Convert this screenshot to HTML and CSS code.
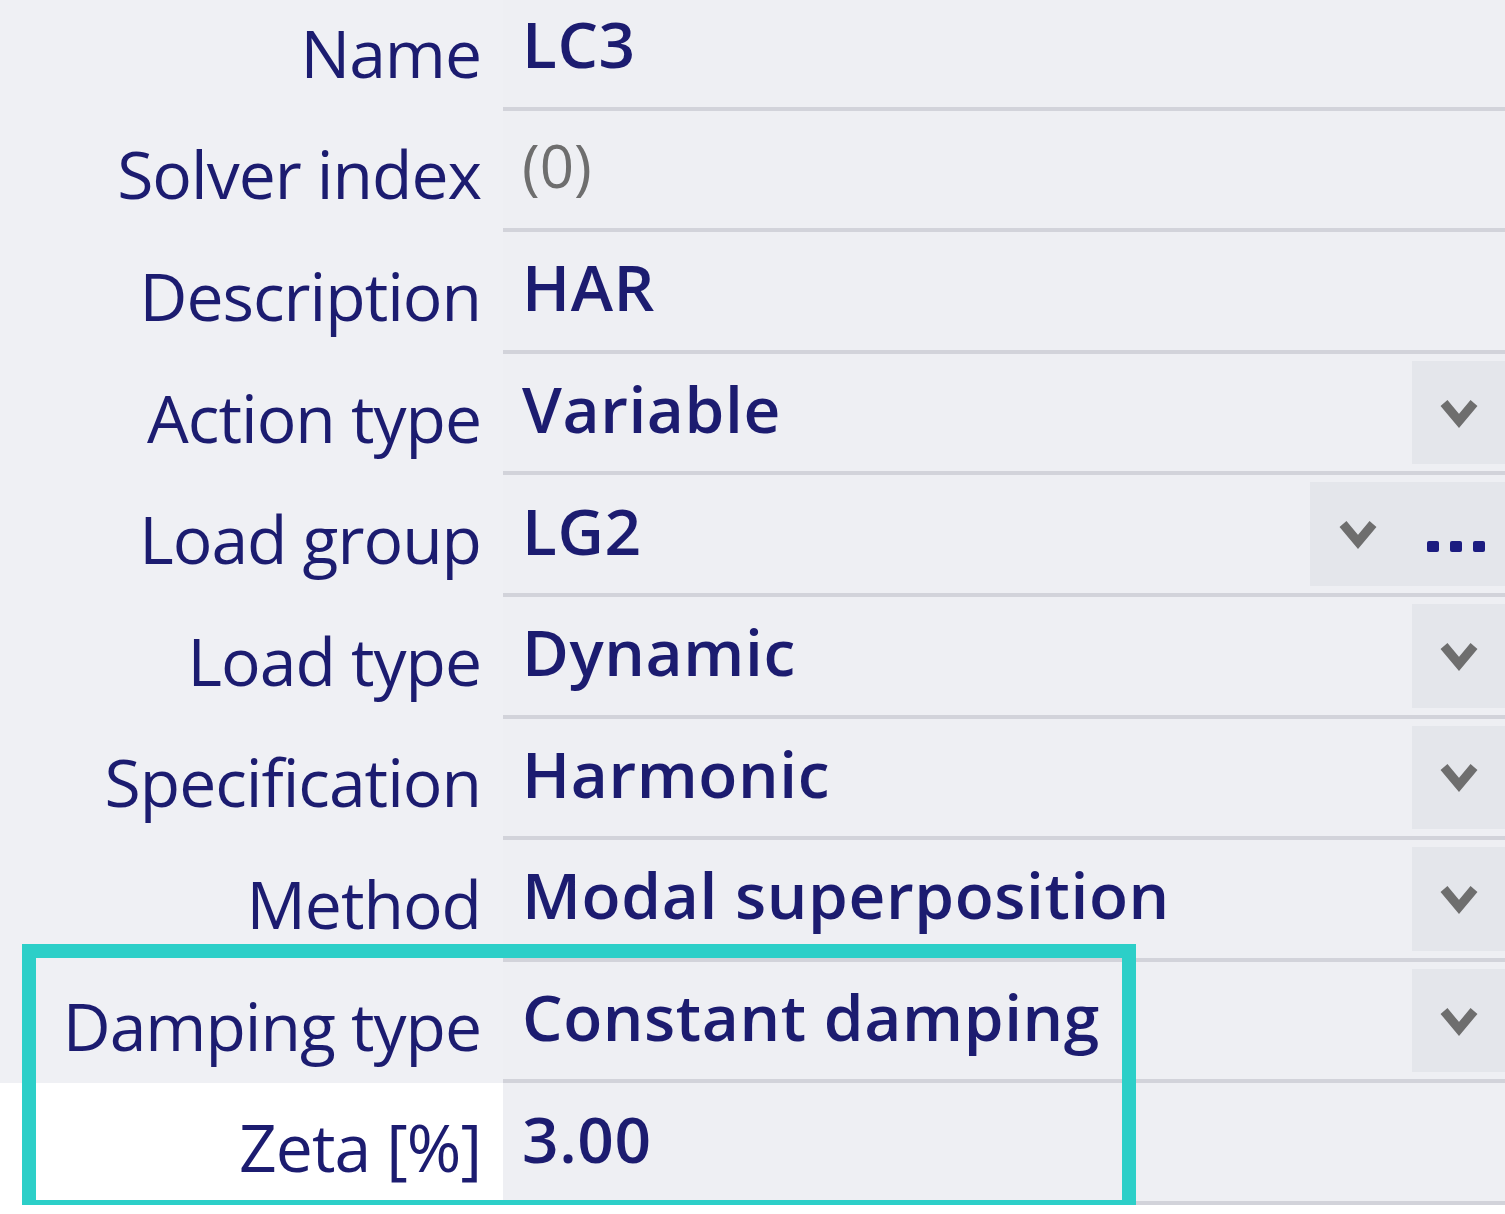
FILE: index.html
```html
<!DOCTYPE html>
<html lang="en">
<head>
    <meta charset="UTF-8">
    <title>Load case properties</title>
    <link rel="stylesheet" href="styles.css">
</head>
<body>
    <div class="panel">
        <div class="row">
            <div class="label">Name</div>
            <div class="value"><span class="text">LC3</span></div>
        </div>
        <div class="row">
            <div class="label">Solver index</div>
            <div class="value"><span class="text muted">(0)</span></div>
        </div>
        <div class="row">
            <div class="label">Description</div>
            <div class="value"><span class="text">HAR</span></div>
        </div>
        <div class="row">
            <div class="label">Action type</div>
            <div class="value">
                <span class="text">Variable</span>
                <div class="btn">
                    <svg class="chevron" viewBox="0 0 40 32"><polyline points="5,6 20,24 35,6"/></svg>
                </div>
            </div>
        </div>
        <div class="row">
            <div class="label">Load group</div>
            <div class="value">
                <span class="text">LG2</span>
                <div class="btn wide">
                    <svg class="chevron" viewBox="0 0 40 32"><polyline points="5,6 20,24 35,6"/></svg>
                    <span class="dots"><i></i><i></i><i></i></span>
                </div>
            </div>
        </div>
        <div class="row">
            <div class="label">Load type</div>
            <div class="value">
                <span class="text">Dynamic</span>
                <div class="btn">
                    <svg class="chevron" viewBox="0 0 40 32"><polyline points="5,6 20,24 35,6"/></svg>
                </div>
            </div>
        </div>
        <div class="row">
            <div class="label">Specification</div>
            <div class="value">
                <span class="text">Harmonic</span>
                <div class="btn">
                    <svg class="chevron" viewBox="0 0 40 32"><polyline points="5,6 20,24 35,6"/></svg>
                </div>
            </div>
        </div>
        <div class="row">
            <div class="label">Method</div>
            <div class="value">
                <span class="text">Modal superposition</span>
                <div class="btn">
                    <svg class="chevron" viewBox="0 0 40 32"><polyline points="5,6 20,24 35,6"/></svg>
                </div>
            </div>
        </div>
        <div class="row">
            <div class="label">Damping type</div>
            <div class="value">
                <span class="text">Constant damping</span>
                <div class="btn">
                    <svg class="chevron" viewBox="0 0 40 32"><polyline points="5,6 20,24 35,6"/></svg>
                </div>
            </div>
        </div>
        <div class="row last">
            <div class="label">Zeta [%]</div>
            <div class="value"><span class="text">3.00</span></div>
        </div>
        <div class="highlight"></div>
    </div>
</body>
</html>
```

FILE: styles.css
```css
body {
    margin: 0;
    padding: 0;
    background: #ffffff;
    font-family: "Open Sans", "Noto Sans", sans-serif;
    color: #1c1c70;
    overflow: hidden;
}

.panel {
    position: relative;
    margin-top: -11px;
}

.row {
    display: flex;
    height: 121.6px;
}

.label {
    width: 481px;
    padding-right: 22px;
    background: #eff0f4;
    display: flex;
    align-items: center;
    justify-content: flex-end;
    padding-top: 4px;
    font-size: 66px;
    letter-spacing: -1px;
    white-space: nowrap;
}

.row.last .label {
    background: #ffffff;
}

.value {
    flex: 1;
    display: flex;
    align-items: center;
    background: #eeeff3;
    border-bottom: 4px solid #d2d3da;
    padding-left: 19px;
    min-width: 0;
}

.text {
    flex: 1;
    font-size: 64px;
    font-weight: 600;
    letter-spacing: 0.6px;
    white-space: nowrap;
    padding-bottom: 8px;
}

.text.muted {
    color: #6e6e6e;
    font-weight: 400;
    font-size: 60px;
    letter-spacing: 0;
}

.btn {
    align-self: stretch;
    margin: 7px 0;
    width: 93px;
    background: #e4e6eb;
    display: flex;
    align-items: center;
    justify-content: center;
}

.btn.wide {
    width: 195px;
    justify-content: flex-start;
    padding-left: 28px;
    box-sizing: border-box;
}

.chevron {
    width: 40px;
    height: 32px;
}

.chevron polyline {
    fill: none;
    stroke: #6e6e6e;
    stroke-width: 9;
    stroke-linecap: butt;
}

.dots {
    display: flex;
    gap: 11px;
    margin-left: 49px;
    margin-top: 24px;
}

.dots i {
    width: 12px;
    height: 11px;
    background: #1c1c80;
    border-radius: 2px;
}

.highlight {
    position: absolute;
    left: 22px;
    top: 955px;
    width: 1086px;
    height: 242px;
    border: 14px solid #2ccfc8;
}
```
